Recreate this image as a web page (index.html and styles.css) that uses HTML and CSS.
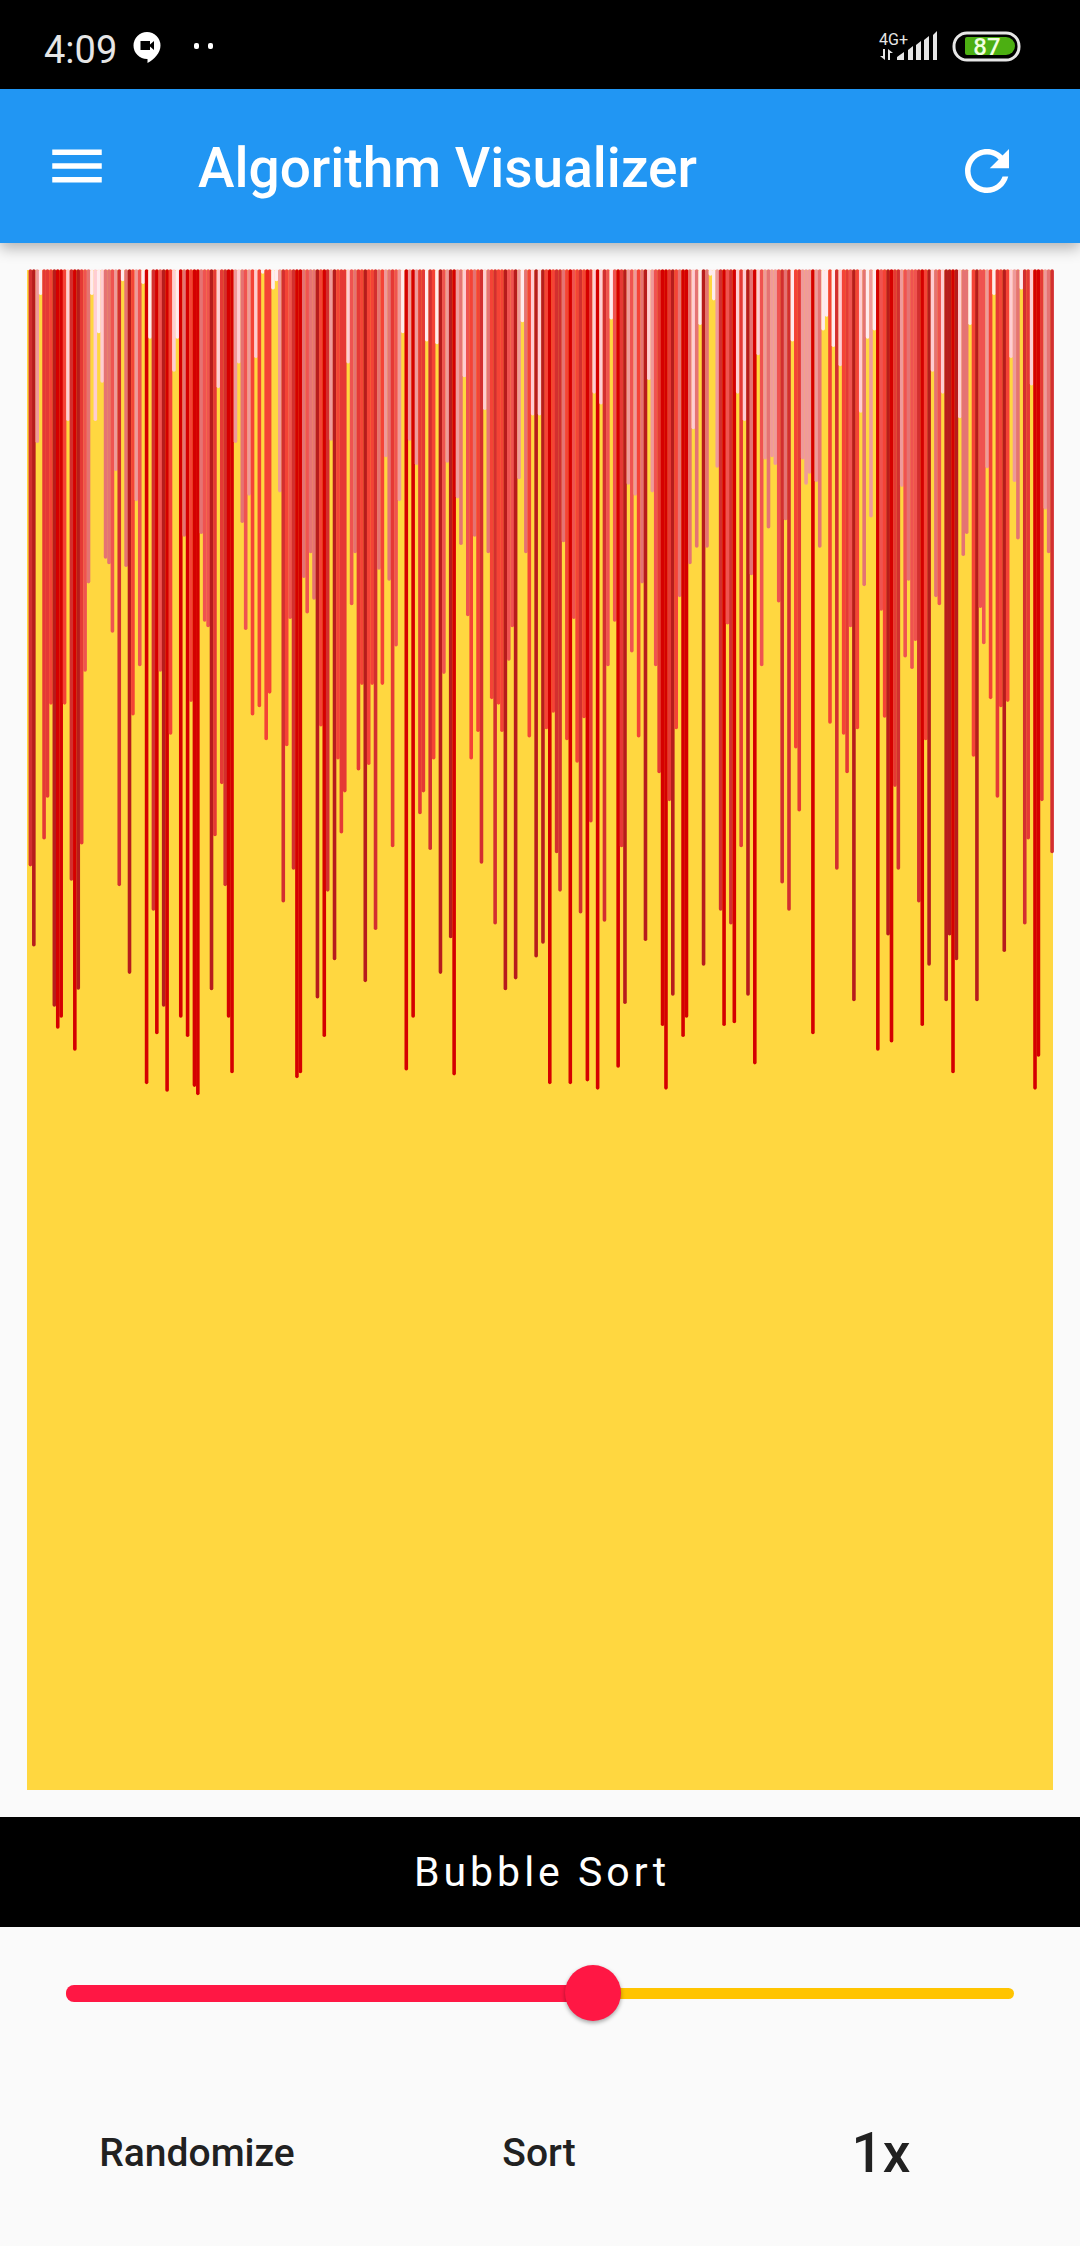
FILE: index.html
```html
<!DOCTYPE html>
<html lang="en">
<head>
<meta charset="utf-8">
<meta name="viewport" content="width=device-width, initial-scale=1">
<title>Algorithm Visualizer</title>
<link rel="stylesheet" href="styles.css">
</head>
<body>
<div class="status">
  <div class="status-group">
    <span class="clock">4:09</span>
    <svg class="chat" width="28" height="31" viewBox="0 0 28 31" aria-hidden="true">
      <path fill="#fff" d="M14 0a13.5 13.5 0 0 1 13.5 13.5C27.500 21 21.500 27 14.500 31v-4H14A13.500 13.500 0 0 1 14 0z"/>
      <path fill="#000" d="M7.500 9h9.500v3.500l4-3.500v9l-4-3.500V18H7.500z"/>
    </svg>
    <svg class="dots" width="20" height="8" viewBox="0 0 20 8" aria-hidden="true">
      <rect x="0" y="0" width="5" height="6" rx="2" fill="#fff"/>
      <rect x="14" y="0" width="5" height="6" rx="2" fill="#fff"/>
    </svg>
  </div>
  <div class="status-group">
    <svg width="60" height="32" viewBox="0 0 60 32" role="img" aria-label="4G+ signal">
      <text x="1" y="14" class="network">4G+</text>
      <g fill="#e6e6e6">
        <path d="M5 18h2v11L2 25h3zM10 29V18l5 4h-3v7z"/>
        <path d="M19 29v-3l7-5v8zM30 29V19l5-4v14zM38 29V14l5-4v19zM46 29V9l5-4v24zM55 29V4l4-4v29z"/>
      </g>
    </svg>
    <svg class="battery" width="69" height="32" viewBox="0 0 69 32" role="img" aria-label="Battery 87%">
      <rect x="2" y="2" width="65" height="27" rx="13" fill="none" stroke="#e6e6e6" stroke-width="3"/>
      <path fill="#4caf12" d="M15 6h39a9 9 0 0 1 0 18H15a2 2 0 0 1-2-2V8a2 2 0 0 1 2-2z"/>
      <text x="35" y="24" class="charge">87</text>
    </svg>
  </div>
</div>

<header class="appbar">
  <button class="icon-button" type="button" aria-label="Open menu">
    <svg width="66" height="66" viewBox="0 0 24 24"><path fill="#fff" d="M3 18h18v-2H3v2zm0-5h18v-2H3v2zm0-7v2h18V6H3z"/></svg>
  </button>
  <h1 class="title">Algorithm Visualizer</h1>
  <button class="icon-button reload" type="button" aria-label="Reset">
    <svg width="66" height="66" viewBox="0 0 24 24"><path fill="#fff" d="M17.650 6.350C16.200 4.900 14.210 4 12 4c-4.420 0-7.990 3.580-7.990 8s3.570 8 7.990 8c3.730 0 6.840-2.550 7.730-6h-2.080c-.82 2.330-3.040 4-5.650 4-3.310 0-6-2.690-6-6s2.690-6 6-6c1.660 0 3.140.69 4.220 1.780L13 11h7V4l-2.350 2.350z"/></svg>
  </button>
</header>

<main class="stage">
  <svg class="chart" id="chart" viewBox="0 0 1026 1520" preserveAspectRatio="none" role="img" aria-label="Values being sorted"></svg>
</main>

<h2 class="algorithm">Bubble Sort</h2>

<footer class="controls">
  <div class="speed">
    <span class="rail"></span>
    <span class="fill" style="width: 55.5%"></span>
    <input class="slider" type="range" min="0" max="9" value="5" aria-label="Speed">
  </div>
  <div class="actions">
    <button class="action" type="button">Randomize</button>
    <button class="action" type="button">Sort</button>
    <button class="action rate" type="button">1x</button>
  </div>
</footer>
<script src="chart.js"></script>
</body>
</html>
```
FILE: styles.css
```css
* {
  box-sizing: border-box;
}

body {
  margin: 0;
  min-height: 100vh;
  display: flex;
  flex-direction: column;
  background: #fafafa;
  color: #212121;
  font-family: Roboto, "Liberation Sans", sans-serif;
}

button {
  border: 0;
  padding: 0;
  background: none;
  color: inherit;
  font: inherit;
  cursor: pointer;
}

svg {
  display: block;
  overflow: visible;
}

.status {
  display: flex;
  justify-content: space-between;
  align-items: center;
  height: 89px;
  padding: 5px 59px 0 44px;
  background: #000;
}

.status-group {
  display: flex;
  align-items: center;
}

.clock {
  padding-top: 6px;
  color: #e6e6e6;
  font-size: 38px;
  line-height: 40px;
}

.chat {
  margin-left: 16px;
}

.dots {
  margin-left: 33px;
}

.battery {
  margin-left: 14px;
}

.network {
  fill: #e6e6e6;
  font-size: 16px;
}

.charge {
  fill: #f1ffe0;
  font-size: 24px;
  font-weight: 500;
  text-anchor: middle;
}

.appbar {
  display: flex;
  align-items: center;
  height: 154px;
  padding: 0 60px 0 44px;
  background: #2196f3;
  color: #fff;
  box-shadow: 0 5px 14px rgba(0, 0, 0, 0.3);
}

.title {
  flex: 1;
  margin: 0 0 0 88px;
  padding-top: 3px;
  font-size: 55px;
  font-weight: 500;
  line-height: 64px;
}

.reload {
  padding-top: 10px;
}

.stage {
  flex: 1;
  display: flex;
  min-height: 400px;
  padding: 27px;
}

.chart {
  flex: 1;
  width: 100%;
  min-width: 0;
  height: auto;
  background: #ffd740;
}

.chart line {
  stroke-width: 3.6;
  stroke-linecap: round;
}

.algorithm {
  margin: 0;
  padding: 31px 0 31px 4px;
  background: #000;
  color: #fff;
  font-size: 41px;
  font-weight: 400;
  line-height: 48px;
  letter-spacing: 4px;
  text-align: center;
}

.speed {
  display: grid;
  align-items: center;
  height: 132px;
  margin: 0 66px;
}

.rail,
.fill,
.slider {
  grid-area: 1 / 1;
}

.rail {
  height: 11px;
  border-radius: 6px;
  background: #ffc400;
}

.fill {
  height: 17px;
  border-radius: 8px;
  background: #ff1744;
}

.slider {
  appearance: none;
  height: 56px;
  margin: 0 -28px;
  background: transparent;
}

.slider::-webkit-slider-thumb {
  appearance: none;
  width: 56px;
  height: 56px;
  border-radius: 50%;
  background: #ff1744;
  box-shadow: 0 2px 4px rgba(0, 0, 0, 0.35);
}

.actions {
  display: grid;
  grid-template-columns: repeat(3, 1fr);
  padding: 28px 28px 28px 26px;
}

.action {
  height: 131px;
  font-size: 39px;
  font-weight: 500;
}

.rate {
  font-size: 55px;
}
```
FILE: chart.js
```js
// Bar depths, in samples below the origin line.
const ORIGIN = 36;
const SCALE = 1.8233;
const STEP = 3.417;
const samples = [
  1122, 1268, 350, 80, 1073, 997, 827, 1378, 1418, 1398,
  827, 310, 1148, 1458, 1347, 1082, 767, 606, 80, 310,
  150, 240, 561, 571, 696, 401, 1158, 55, 576, 1318,
  847, 456, 757, 60, 1519, 160, 1203, 1428, 767, 1378,
  1533, 882, 220, 160, 1398, 521, 1433, 822, 1524, 1539,
  516, 676, 686, 1348, 1067, 250, 972, 1158, 1398, 1499,
  350, 205, 496, 691, 446, 847, 195, 832, 40, 892,
  807, 70, 55, 440, 1188, 903, 671, 1128, 1508, 1499,
  596, 661, 551, 636, 1363, 867, 1433, 1168, 346, 1293,
  927, 1062, 987, 205, 646, 551, 947, 791, 1333, 937,
  791, 1238, 581, 791, 376, 601, 1087, 721, 456, 150,
  1494, 346, 1398, 390, 1027, 987, 165, 1092, 927, 170,
  1318, 771, 386, 1253, 1503, 451, 536, 230, 666, 927,
  521, 877, 1117, 290, 551, 817, 1228, 827, 877, 1348,
  747, 686, 1328, 416, 130, 551, 887, 300, 1288, 300,
  1263, 872, 1519, 842, 1098, 1168, 531, 892, 1519, 671,
  933, 1208, 852, 1514, 1042, 260, 1529, 280, 1223, 757,
  125, 676, 1489, 1087, 1373, 426, 732, 446, 887, 606,
  1258, 235, 440, 757, 952, 1413, 1529, 1003, 1358, 872,
  631, 1433, 1398, 571, 325, 541, 135, 1303, 541, 45,
  90, 395, 1203, 1413, 681, 1228, 1408, 260, 1087, 310,
  1358, 591, 1483, 190, 757, 380, 506, 376, 390, 641,
  1153, 491, 1203, 165, 907, 1022, 380, 426, 406, 1428,
  421, 541, 145, 120, 862, 175, 1128, 210, 882, 952,
  686, 1368, 872, 295, 611, 160, 486, 145, 1458, 656,
  851, 1248, 1443, 977, 1128, 430, 741, 601, 762, 711,
  1188, 1413, 892, 1303, 220, 631, 646, 260, 1368, 1248,
  1499, 1293, 305, 556, 516, 135, 922, 1368, 651, 717,
  396, 817, 80, 997, 832, 1278, 822, 195, 421, 526,
  70, 1228, 1073, 245, 1529, 1469, 1003, 471, 551, 1098
];

// One shade for every tenth of the value range, light to dark.
const shades = [
  '#ffebee', '#ffcdd2', '#ef9a9a', '#e57373', '#ef5350',
  '#f44336', '#e53935', '#d32f2f', '#b71c1c', '#d50000'
];

const chart = document.getElementById('chart');
samples.forEach((sample, index) => {
  const depth = sample - ORIGIN;
  const x = (index + 1) * STEP;
  const line = document.createElementNS('http://www.w3.org/2000/svg', 'line');
  line.setAttribute('x1', x);
  line.setAttribute('x2', x);
  line.setAttribute('y1', 1);
  line.setAttribute('y2', Math.max(2, depth / SCALE - 1));
  line.setAttribute('stroke', shades[Math.min(9, Math.floor(depth / 150.3))]);
  chart.appendChild(line);
});
```
